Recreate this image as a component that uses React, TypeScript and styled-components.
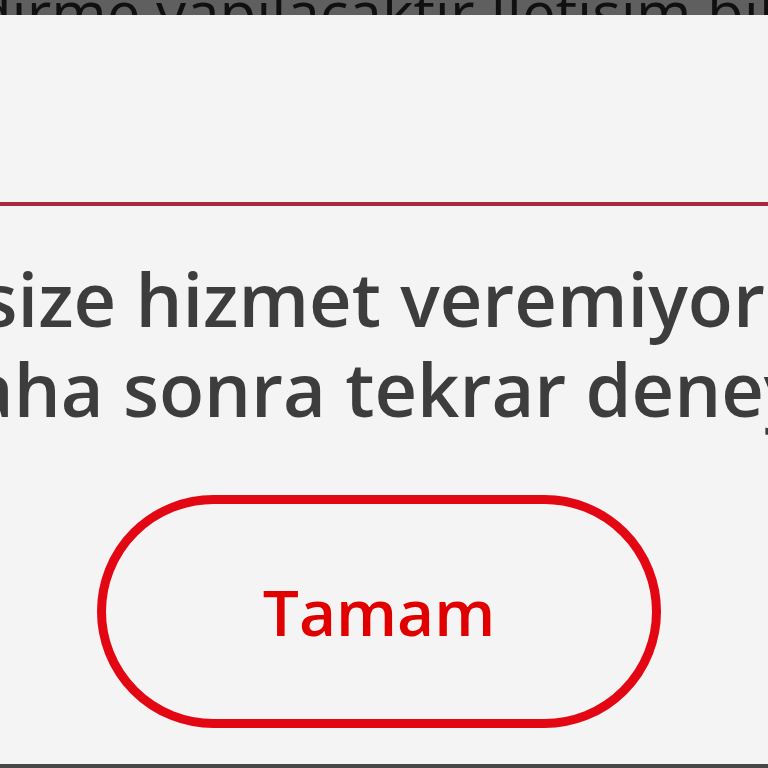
import React, {FC} from 'react';
import styled, {createGlobalStyle} from 'styled-components';

const GlobalStyle = createGlobalStyle`
  html, body {
    margin: 0;
    padding: 0;
    background: #474747;
    overflow: hidden;
  }
`;

// shift: how far the centred line sits left of the dialog centre
const LINES = [
  {text: 'Şu anda size hizmet veremiyoruz.', shift: 107},
  {text: 'Lütfen daha sonra tekrar deneyiniz.', shift: 69},
];

export const ErrorDialog: FC<{lines: {text: string; shift: number}[]; action: string}> = ({
  lines,
  action,
}) => (
  <Page>
    <Backdrop>
      <BackdropText>Bilgilendirme yapılacaktır İletişim bilgilerinizi</BackdropText>
    </Backdrop>
    <Panel>
      <Header />
      <Body>
        <Message>
          {lines.map(l => (
            <Line key={l.text} $shift={l.shift}>
              {l.text}
            </Line>
          ))}
        </Message>
        <OkButton type="button">{action}</OkButton>
      </Body>
    </Panel>
  </Page>
);
ErrorDialog.displayName = 'ErrorDialog';

const App: FC = () => (
  <>
    <GlobalStyle />
    <ErrorDialog lines={LINES} action="Tamam" />
  </>
);

export default App;

const Page = styled.div`
  width: 768px;
  height: 768px;
  display: flex;
  flex-direction: column;
  overflow: hidden;
  font-family: 'Open Sans', 'Liberation Sans', sans-serif;
`;

const Backdrop = styled.div`
  height: 15px;
  flex-shrink: 0;
  background: #5f5f5f;
  display: flex;
  align-items: flex-start;
  justify-content: center;
  overflow: hidden;
`;

const BackdropText = styled.div`
  font-size: 60px;
  line-height: 1;
  font-weight: 500;
  color: #101010;
  white-space: nowrap;
  margin-top: -18px;
  margin-left: 10px;
`;

const Panel = styled.div`
  height: 749px;
  flex-shrink: 0;
  background: #f4f4f4;
  display: flex;
  flex-direction: column;
`;

const Header = styled.div`
  height: 187px;
  flex-shrink: 0;
  border-bottom: 4px solid #a82a40;
`;

const Body = styled.div`
  display: flex;
  flex-direction: column;
  align-items: center;
  padding: 48px 10px 0 0;
`;

const Message = styled.div`
  display: flex;
  flex-direction: column;
  align-items: center;
  width: 100%;
`;

const Line = styled.div<{$shift: number}>`
  font-size: 74px;
  line-height: 90px;
  font-weight: 600;
  color: #3d3d3d;
  white-space: nowrap;
  margin-right: ${p => p.$shift * 2}px;
`;

const OkButton = styled.button`
  margin-top: 61px;
  width: 564px;
  height: 233px;
  border: 9px solid #e30613;
  border-radius: 120px;
  background: transparent;
  color: #e00000;
  font-family: inherit;
  font-size: 64px;
  font-weight: 600;
  cursor: pointer;
`;
